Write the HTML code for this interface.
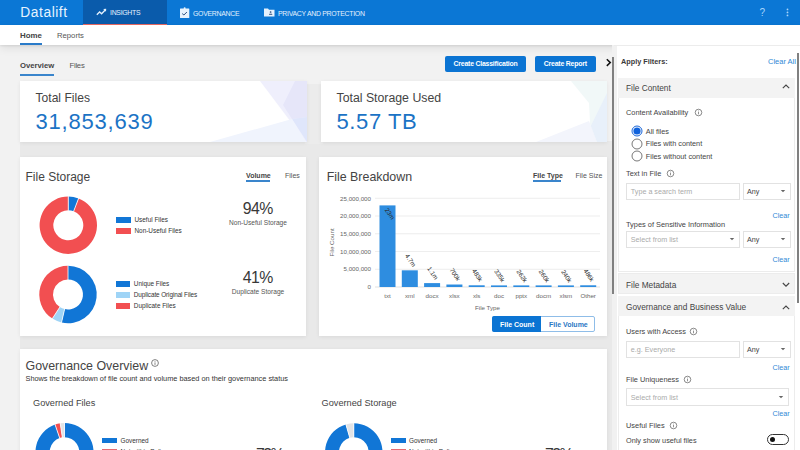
<!DOCTYPE html>
<html><head><meta charset="utf-8">
<style>
*{box-sizing:border-box;margin:0;padding:0}
html,body{width:800px;height:450px;overflow:hidden;background:#f2f2f2;font-family:"Liberation Sans",sans-serif;color:#333}
.a{position:absolute}
.t{position:absolute;white-space:nowrap;line-height:1}
#hdr{left:0;top:0;width:800px;height:24.5px;background:#0b77d5}
#act{left:83px;top:0;width:84px;height:24.5px;background:#0a5bab;border-bottom:1.5px solid #e86a64}
.ht{color:#e4f1fd;font-size:6.9px;letter-spacing:-0.28px}
#sub{left:0;top:24.5px;width:800px;height:20.5px;background:#fff;box-shadow:0 1px 2px rgba(0,0,0,.08),0 3px 10px rgba(0,0,0,.09)}
.card{position:absolute;background:#fff;box-shadow:0 1px 4px rgba(0,0,0,.07)}
.btn{position:absolute;background:#0b74d3;border-radius:2px;color:#fff;font-weight:bold;font-size:6.9px;letter-spacing:-0.2px;line-height:16px;text-align:center}
#panel{left:617px;top:45px;width:183px;height:405px;background:#fff}
.sh{position:absolute;left:618px;width:177px;height:20px;background:#f3f3f3}
.lbl{color:#444}
.lnk{color:#2f89d6}
.inp{position:absolute;border:1px solid #e2e2e2;background:#fff}
.ph{color:#aaa}
.lg{font-size:6.4px;color:#333}
.big{font-size:15.8px;color:#383838;letter-spacing:-0.5px}
.sm{font-size:6.6px;color:#555}
.pl{font-size:7.2px;color:#444}
.shd{font-size:8px;color:#444}
.info{position:absolute;width:7px;height:7px}
</style></head><body>
<!-- header -->
<div id="hdr" class="a"></div>
<div id="act" class="a"></div>
<div class="t" style="left:20.3px;top:6.3px;font-size:13.8px;color:#e6f3ff;letter-spacing:0.55px">Datalift</div>
<svg class="a" style="left:96px;top:8px" width="11" height="8" viewBox="0 0 11 8"><path d="M0.8 6.8 L3.6 4 L5.6 5.8 L9.2 2" stroke="#e4f1fd" stroke-width="1.3" fill="none"/><path d="M7.2 1 L10.2 0.8 L10 3.8 Z" fill="#e4f1fd"/></svg>
<div class="t ht" style="left:110px;top:10px">INSIGHTS</div>
<svg class="a" style="left:180px;top:6.5px" width="10" height="11" viewBox="0 0 10 11"><rect x="0" y="1.4" width="9.3" height="9.5" rx="0.5" fill="#e8f3fd"/><circle cx="4.65" cy="1.3" r="1" fill="#e8f3fd"/><path d="M2.2 6.6 L3.9 8 L6.9 5" stroke="#2c4f80" stroke-width="1" fill="none"/></svg>
<div class="t ht" style="left:193px;top:10.5px">GOVERNANCE</div>
<svg class="a" style="left:263.5px;top:8px" width="11" height="9" viewBox="0 0 11 9"><path d="M0 0.5 L4 0.5 L5 1.8 L10.5 1.8 L10.5 8.5 L0 8.5 Z" fill="#e4f1fd"/><circle cx="6.6" cy="4" r="0.85" fill="#2a4a78"/><rect x="5" y="5.7" width="3.3" height="1.1" rx="0.5" fill="#2a4a78"/></svg>
<div class="t ht" style="left:278px;top:10.5px">PRIVACY AND PROTECTION</div>
<div class="t" style="left:759.5px;top:8px;font-size:10px;color:#a9d5fb">?</div>
<svg class="a" style="left:786px;top:8px" width="3" height="9"><circle cx="1.5" cy="1.4" r="0.9" fill="#a9d5fb"/><circle cx="1.5" cy="4.4" r="0.9" fill="#a9d5fb"/><circle cx="1.5" cy="7.4" r="0.9" fill="#a9d5fb"/></svg>

<!-- subnav -->
<div id="sub" class="a"></div>
<div class="t" style="left:20px;top:31.6px;font-size:7.9px;font-weight:bold;color:#444">Home</div>
<div class="a" style="left:20px;top:43px;width:22px;height:1.8px;background:#2a7bc9"></div>
<div class="t" style="left:57px;top:31.6px;font-size:7.7px;color:#555">Reports</div>

<!-- overview tabs -->
<div class="t" style="left:20px;top:62px;font-size:7.7px;font-weight:bold;color:#444">Overview</div>
<div class="a" style="left:20px;top:74.3px;width:34px;height:1.8px;background:#3a85cc"></div>
<div class="t" style="left:69.5px;top:62px;font-size:7.7px;color:#555;letter-spacing:-0.25px">Files</div>
<div class="btn" style="left:445px;top:55.5px;width:81px;height:16px">Create Classification</div>
<div class="btn" style="left:535px;top:55.5px;width:60.5px;height:16px">Create Report</div>

<div class="a" style="left:20px;top:141px;width:592px;height:309px;background:#e9e9e9"></div>
<div class="a" style="left:305px;top:84px;width:18px;height:60px;background:#ececec"></div>
<!-- total cards -->
<div class="card" style="left:20px;top:81px;width:287px;height:61px"></div>
<div class="t" style="left:35.5px;top:92.2px;font-size:12.1px;color:#444">Total Files</div>
<div class="t" style="left:35.5px;top:110.6px;font-size:22px;color:#1b73c5;letter-spacing:0.8px">31,853,639</div>
<div class="card" style="left:321px;top:81px;width:286px;height:61px"></div>
<div class="t" style="left:336.5px;top:92.2px;font-size:12.3px;color:#444">Total Storage Used</div>
<div class="t" style="left:336.5px;top:110.6px;font-size:22px;color:#1b73c5;letter-spacing:0.6px">5.57 TB</div>

<svg class="a" style="left:20px;top:81px" width="287" height="61" viewBox="0 0 287 61">
<polygon points="240,0 287,0 287,61 286,61" fill="#efeffc"/>
<polygon points="275,0 287,0 287,36 272,38 263,24" fill="#e6e6f9"/>
<polygon points="272,38 287,36 287,61" fill="#dfe6fb"/>
<polygon points="190,61 272,38 286,61" fill="#f0f4fd"/>
</svg>
<svg class="a" style="left:321px;top:81px" width="286" height="61" viewBox="0 0 286 61">
<polygon points="250,0 286,0 286,61 270,61 268,22" fill="#f1f8f8"/>
<polygon points="286,12 286,61 262,61" fill="#e8f0fa"/>
<polygon points="215,61 268,40 276,61" fill="#f3f5fc"/>
</svg>
<!-- file storage card -->
<div class="card" style="left:20px;top:157px;width:286px;height:179px"></div>
<div class="t" style="left:25.5px;top:171px;font-size:12px;color:#444">File Storage</div>
<div class="t" style="left:246px;top:172px;font-size:7px;font-weight:bold;color:#444">Volume</div>
<div class="a" style="left:246px;top:180.3px;width:24px;height:1.5px;background:#3a85cc"></div>
<div class="t" style="left:285px;top:172px;font-size:7px;color:#555">Files</div>

<!-- file breakdown card -->
<div class="card" style="left:318.5px;top:157px;width:288.5px;height:179px"></div>
<div class="t" style="left:326.7px;top:170.6px;font-size:12.4px;color:#444">File Breakdown</div>
<div class="t" style="left:533px;top:172px;font-size:7px;font-weight:bold;color:#444">File Type</div>
<div class="a" style="left:533px;top:180.3px;width:27.5px;height:1.5px;background:#3a85cc"></div>
<div class="t" style="left:575.5px;top:172px;font-size:7px;color:#555">File Size</div>

<!-- governance card -->
<div class="card" style="left:20px;top:349px;width:587px;height:110px"></div>
<div class="t" style="left:25.5px;top:360px;font-size:12.4px;color:#444">Governance Overview</div>

<svg class="a" style="left:0;top:0" width="800" height="450" viewBox="0 0 800 450">
<!--d1-->
<path d="M68.30 196.50A28.7 28.7 0 0 1 78.59 198.41L73.68 211.20A15 15 0 0 0 68.30 210.20Z" fill="#1176d6"/>
<path d="M78.59 198.41A28.7 28.7 0 1 1 68.30 196.50L68.30 210.20A15 15 0 1 0 73.68 211.20Z" fill="#f24f51"/>
<line x1="68.30" y1="210.70" x2="68.30" y2="196.00" stroke="#fff" stroke-width="0.8"/>
<line x1="73.50" y1="211.66" x2="78.76" y2="197.94" stroke="#fff" stroke-width="0.8"/>
<!--d2-->
<path d="M68.00 265.80A28.7 28.7 0 1 1 61.54 322.46L64.63 309.12A15 15 0 1 0 68.00 279.50Z" fill="#1176d6"/>
<path d="M61.54 322.46A28.7 28.7 0 0 1 52.37 318.57L59.83 307.08A15 15 0 0 0 64.63 309.12Z" fill="#9fd4f6"/>
<path d="M52.37 318.57A28.7 28.7 0 0 1 68.00 265.80L68.00 279.50A15 15 0 0 0 59.83 307.08Z" fill="#f24f51"/>
<line x1="68.00" y1="280.00" x2="68.00" y2="265.30" stroke="#fff" stroke-width="0.8"/>
<line x1="64.74" y1="308.63" x2="61.43" y2="322.95" stroke="#fff" stroke-width="0.8"/>
<line x1="60.10" y1="306.66" x2="52.10" y2="318.99" stroke="#fff" stroke-width="0.8"/>
<!--d3-->
<path d="M64.50 423.00A29 29 0 1 1 55.06 424.58L59.68 438.01A14.8 14.8 0 1 0 64.50 437.20Z" fill="#1176d6"/>
<path d="M55.06 424.58A29 29 0 0 1 60.21 423.32L62.31 437.36A14.8 14.8 0 0 0 59.68 438.01Z" fill="#f24f51"/>
<path d="M60.21 423.32A29 29 0 0 1 64.50 423.00L64.50 437.20A14.8 14.8 0 0 0 62.31 437.36Z" fill="#e1e3e6"/>
<line x1="64.50" y1="437.70" x2="64.50" y2="422.50" stroke="#fff" stroke-width="0.8"/>
<line x1="59.84" y1="438.48" x2="54.90" y2="424.11" stroke="#fff" stroke-width="0.8"/>
<line x1="62.39" y1="437.86" x2="60.14" y2="422.82" stroke="#fff" stroke-width="0.8"/>
<!--d4-->
<path d="M353.80 423.30A28.7 28.7 0 1 1 345.89 424.41L349.72 437.77A14.8 14.8 0 1 0 353.80 437.20Z" fill="#1176d6"/>
<path d="M345.89 424.41A28.7 28.7 0 0 1 353.80 423.30L353.80 437.20A14.8 14.8 0 0 0 349.72 437.77Z" fill="#e1e3e6"/>
<line x1="353.80" y1="437.70" x2="353.80" y2="422.80" stroke="#fff" stroke-width="0.8"/>
<line x1="349.86" y1="438.25" x2="345.75" y2="423.93" stroke="#fff" stroke-width="0.8"/>

<line x1="375" y1="287.00" x2="600" y2="287.00" stroke="#d9d9d9" stroke-width="0.8"/>
<line x1="375" y1="269.26" x2="600" y2="269.26" stroke="#e8e8e8" stroke-width="0.8"/>
<line x1="375" y1="251.52" x2="600" y2="251.52" stroke="#e8e8e8" stroke-width="0.8"/>
<line x1="375" y1="233.78" x2="600" y2="233.78" stroke="#e8e8e8" stroke-width="0.8"/>
<line x1="375" y1="216.04" x2="600" y2="216.04" stroke="#e8e8e8" stroke-width="0.8"/>
<line x1="375" y1="198.30" x2="600" y2="198.30" stroke="#e8e8e8" stroke-width="0.8"/>
<rect x="379.50" y="205.40" width="16" height="81.60" fill="#2e8de0"/>
<rect x="401.80" y="270.32" width="16" height="16.68" fill="#2e8de0"/>
<rect x="424.10" y="283.10" width="16" height="3.90" fill="#2e8de0"/>
<rect x="446.40" y="284.52" width="16" height="2.48" fill="#2e8de0"/>
<rect x="468.70" y="285.29" width="16" height="1.71" fill="#2e8de0"/>
<rect x="491.00" y="285.40" width="16" height="1.60" fill="#2e8de0"/>
<rect x="513.30" y="285.40" width="16" height="1.60" fill="#2e8de0"/>
<rect x="535.60" y="285.40" width="16" height="1.60" fill="#2e8de0"/>
<rect x="557.90" y="285.40" width="16" height="1.60" fill="#2e8de0"/>
<rect x="580.20" y="285.28" width="16" height="1.72" fill="#2e8de0"/>

<g font-family="Liberation Sans" font-size="6.2" fill="#666">
<text x="371" y="289.20" text-anchor="end">0</text>
<text x="371" y="271.46" text-anchor="end">5,000,000</text>
<text x="371" y="253.72" text-anchor="end">10,000,000</text>
<text x="371" y="235.98" text-anchor="end">15,000,000</text>
<text x="371" y="218.24" text-anchor="end">20,000,000</text>
<text x="371" y="200.50" text-anchor="end">25,000,000</text>
<text x="387.50" y="298" text-anchor="middle">txt</text>
<text x="409.80" y="298" text-anchor="middle">xml</text>
<text x="432.10" y="298" text-anchor="middle">docx</text>
<text x="454.40" y="298" text-anchor="middle">xlsx</text>
<text x="476.70" y="298" text-anchor="middle">xls</text>
<text x="499.00" y="298" text-anchor="middle">doc</text>
<text x="521.30" y="298" text-anchor="middle">pptx</text>
<text x="543.60" y="298" text-anchor="middle">docm</text>
<text x="565.90" y="298" text-anchor="middle">xlsm</text>
<text x="588.20" y="298" text-anchor="middle">Other</text>
<text x="487.5" y="310" text-anchor="middle">File Type</text>
<text transform="translate(333.8,242.5) rotate(-90)" text-anchor="middle">File Count</text>
</g>
<g font-family="Liberation Sans" font-size="6.3">
<text transform="translate(384.50,209.90) rotate(56)" fill="#2a2a2a">23m</text>
<text transform="translate(404.80,255.80) rotate(56)" fill="#2a2a2a">4.7m</text>
<text transform="translate(427.10,268.60) rotate(56)" fill="#2a2a2a">1.1m</text>
<text transform="translate(449.40,270.00) rotate(56)" fill="#2a2a2a">700k</text>
<text transform="translate(471.70,270.80) rotate(56)" fill="#2a2a2a">483k</text>
<text transform="translate(494.00,271.30) rotate(56)" fill="#2a2a2a">335k</text>
<text transform="translate(516.30,271.60) rotate(56)" fill="#2a2a2a">262k</text>
<text transform="translate(538.60,271.60) rotate(56)" fill="#2a2a2a">260k</text>
<text transform="translate(560.90,271.70) rotate(56)" fill="#2a2a2a">240k</text>
<text transform="translate(583.20,270.80) rotate(56)" fill="#2a2a2a">486k</text>
</g>
</svg>
<!-- legends -->
<div class="a" style="left:116.3px;top:217px;width:15.2px;height:6px;background:#1176d6"></div>
<div class="a" style="left:116.3px;top:228px;width:15.2px;height:6px;background:#f24f51"></div>
<div class="t lg" style="left:134.5px;top:217.0px">Useful Files</div>
<div class="t lg" style="left:134.5px;top:228.0px">Non-Useful Files</div>
<div class="a" style="left:115.5px;top:281px;width:14.5px;height:5.5px;background:#1176d6"></div>
<div class="a" style="left:115.5px;top:292px;width:14.5px;height:5.5px;background:#9fd4f6"></div>
<div class="a" style="left:115.5px;top:303px;width:14.5px;height:5.5px;background:#f24f51"></div>
<div class="t lg" style="left:133.8px;top:281.0px">Unique Files</div>
<div class="t lg" style="left:133.8px;top:292.0px;letter-spacing:-0.1px">Duplicate Original Files</div>
<div class="t lg" style="left:133.8px;top:303.0px">Duplicate Files</div>
<div class="t big" style="left:242.8px;top:201.3px">94%</div>
<div class="t sm" style="left:229px;top:220px">Non-Useful Storage</div>
<div class="t big" style="left:242.8px;top:269.6px">41%</div>
<div class="t sm" style="left:231.8px;top:289px">Duplicate Storage</div>
<!-- toggle -->
<div class="a" style="left:492px;top:316px;width:103px;height:16px;border:1px solid #8fbde8;border-radius:2px;background:#fff"></div>
<div class="a" style="left:492px;top:316px;width:49px;height:16px;background:#0b74d3;border-radius:2px 0 0 2px"></div>
<div class="t" style="left:500px;top:320.5px;font-size:7px;font-weight:bold;color:#fff">File Count</div>
<div class="t" style="left:549px;top:320.5px;font-size:7px;font-weight:bold;color:#2a77c4">File Volume</div>
<!-- governance -->
<svg class="a" style="left:151.4px;top:359.2px" width="8" height="8" viewBox="0 0 8 8"><circle cx="4" cy="4" r="3.4" fill="none" stroke="#555" stroke-width="0.75"/><rect x="3.65" y="3.4" width="0.7" height="2.5" fill="#555"/><rect x="3.65" y="2.1" width="0.7" height="0.7" fill="#555"/></svg>
<div class="t" style="left:25.5px;top:374.5px;font-size:7.35px;color:#333">Shows the breakdown of file count and volume based on their governance status</div>
<div class="t" style="left:33px;top:399.3px;font-size:9.2px;color:#444">Governed Files</div>
<div class="t" style="left:321.6px;top:399.3px;font-size:9.2px;color:#444">Governed Storage</div>
<div class="a" style="left:102.2px;top:438.4px;width:14.5px;height:5px;background:#1176d6"></div>
<div class="a" style="left:102.2px;top:449px;width:14.5px;height:5px;background:#e86b70"></div>
<div class="t lg" style="left:120.5px;top:438.0px">Governed</div>
<div class="t lg" style="left:120.5px;top:449.0px">Not within Policy</div>
<div class="a" style="left:391px;top:438.4px;width:14.5px;height:5px;background:#1176d6"></div>
<div class="a" style="left:391px;top:449px;width:14.5px;height:5px;background:#e86b70"></div>
<div class="t lg" style="left:409px;top:438.0px">Governed</div>
<div class="t lg" style="left:409px;top:449.0px">Not within Policy</div>
<div class="t big" style="left:256px;top:447.2px;letter-spacing:-1.5px">73%</div>
<div class="t big" style="left:545px;top:447.2px;letter-spacing:-1.5px">73%</div>
<!-- scrollbar main -->
<div class="a" style="left:612px;top:45px;width:6px;height:405px;background:#f1f1f1"></div>
<div class="a" style="left:612px;top:57px;width:1.8px;height:237px;background:#808080"></div>

<!-- panel -->
<div id="panel" class="a"></div>
<div class="a" style="left:614px;top:44.5px;width:186px;height:1.5px;background:#ececec"></div>
<div class="t" style="left:621px;top:57.5px;font-size:7.3px;font-weight:bold;color:#3a3a3a">Apply Filters:</div>
<div class="t lnk" style="left:768px;top:57.5px;font-size:7.5px">Clear All</div>
<div class="a" style="left:618px;top:78px;width:177px;height:194px;border:1px solid #ececec;border-top:none;background:#fff"></div>
<div class="sh" style="top:78px;height:19.5px"></div>
<div class="t shd" style="left:626px;top:83.97px;font-size:8.3px;">File Content</div>
<svg class="a" style="left:781.7px;top:84.2px" width="8" height="5.2" viewBox="0 0 8 5.2"><path d="M0.8 4.2 L4 1 L7.2 4.2" fill="none" stroke="#444" stroke-width="1.1"/></svg>
<div class="t pl" style="left:626px;top:108.74px;font-size:7.4px;">Content Availability</div>
<svg class="a" style="left:694.2px;top:108.1px" width="9" height="9" viewBox="0 0 9 9"><circle cx="4.5" cy="4.5" r="3.3" fill="none" stroke="#666" stroke-width="0.75"/><rect x="4.15" y="3.9" width="0.7" height="2.4" fill="#666"/><rect x="4.15" y="2.6" width="0.7" height="0.7" fill="#666"/></svg>
<svg class="a" style="left:631.2px;top:125.19999999999999px" width="12" height="12" viewBox="0 0 12 12"><circle cx="6" cy="6" r="5" fill="#fff" stroke="#1a66d9" stroke-width="1"/><circle cx="6" cy="6" r="3.6" fill="#0f62dc"/></svg>
<div class="t pl" style="left:645.8px;top:127.82px;font-size:7.3px;">All files</div>
<svg class="a" style="left:631.2px;top:137.6px" width="12" height="12" viewBox="0 0 12 12"><circle cx="6" cy="6" r="5" fill="#fff" stroke="#555" stroke-width="0.8"/></svg>
<div class="t pl" style="left:645.8px;top:140.22px;font-size:7.3px;">Files with content</div>
<svg class="a" style="left:631.2px;top:150.2px" width="12" height="12" viewBox="0 0 12 12"><circle cx="6" cy="6" r="5" fill="#fff" stroke="#555" stroke-width="0.8"/></svg>
<div class="t pl" style="left:645.8px;top:152.82px;font-size:7.3px;">Files without content</div>
<div class="t pl" style="left:626px;top:169.54px;font-size:7.4px;">Text in File</div>
<svg class="a" style="left:666.3px;top:169.1px" width="9" height="9" viewBox="0 0 9 9"><circle cx="4.5" cy="4.5" r="3.3" fill="none" stroke="#666" stroke-width="0.75"/><rect x="4.15" y="3.9" width="0.7" height="2.4" fill="#666"/><rect x="4.15" y="2.6" width="0.7" height="0.7" fill="#666"/></svg>
<div class="inp" style="left:625.5px;top:182.5px;width:114.5px;height:17px"></div>
<div class="t ph" style="left:630.8px;top:187.91px;font-size:7.2px;">Type a search term</div>
<div class="inp" style="left:742.5px;top:182.5px;width:48.8px;height:17px"></div>
<div class="t pl" style="left:747px;top:187.91px;font-size:7.2px;">Any</div>
<svg class="a" style="left:780.3px;top:189px" width="6" height="4" viewBox="0 0 6 4"><path d="M0.8 1 L5.2 1 L3 3.2Z" fill="#666"/></svg>
<div class="t lnk" style="left:772.5px;top:211.51px;font-size:7.2px;">Clear</div>
<div class="t pl" style="left:626px;top:221.34px;font-size:7.4px;">Types of Sensitive Information</div>
<div class="inp" style="left:625.5px;top:230.5px;width:114.5px;height:17px"></div>
<div class="t ph" style="left:630.8px;top:235.91px;font-size:7.2px;">Select from list</div>
<svg class="a" style="left:729px;top:237px" width="6" height="4" viewBox="0 0 6 4"><path d="M0.8 1 L5.2 1 L3 3.2Z" fill="#666"/></svg>
<div class="inp" style="left:742.5px;top:230.5px;width:48.8px;height:17px"></div>
<div class="t pl" style="left:747px;top:235.91px;font-size:7.2px;">Any</div>
<svg class="a" style="left:780.3px;top:237px" width="6" height="4" viewBox="0 0 6 4"><path d="M0.8 1 L5.2 1 L3 3.2Z" fill="#666"/></svg>
<div class="t lnk" style="left:772.5px;top:255.91px;font-size:7.2px;">Clear</div>
<div class="sh" style="top:273px;height:20.5px;border:1px solid #ececec"></div>
<div class="t shd" style="left:626px;top:280.57px;font-size:8.3px;">File Metadata</div>
<svg class="a" style="left:781.7px;top:282.4px" width="8" height="5.2" viewBox="0 0 8 5.2"><path d="M0.8 1 L4 4.2 L7.2 1" fill="none" stroke="#444" stroke-width="1.1"/></svg>
<div class="a" style="left:618px;top:295.5px;width:177px;height:160px;border:1px solid #ececec;background:#fff"></div>
<div class="sh" style="top:295.5px;height:20.5px"></div>
<div class="t shd" style="left:626px;top:302.97px;font-size:8.3px;">Governance and Business Value</div>
<svg class="a" style="left:781.7px;top:304.9px" width="8" height="5.2" viewBox="0 0 8 5.2"><path d="M0.8 4.2 L4 1 L7.2 4.2" fill="none" stroke="#444" stroke-width="1.1"/></svg>
<div class="t pl" style="left:626px;top:327.54px;font-size:7.4px;">Users with Access</div>
<svg class="a" style="left:689.3px;top:326.8px" width="9" height="9" viewBox="0 0 9 9"><circle cx="4.5" cy="4.5" r="3.3" fill="none" stroke="#666" stroke-width="0.75"/><rect x="4.15" y="3.9" width="0.7" height="2.4" fill="#666"/><rect x="4.15" y="2.6" width="0.7" height="0.7" fill="#666"/></svg>
<div class="inp" style="left:625.5px;top:340.5px;width:114.5px;height:17px"></div>
<div class="t ph" style="left:630.8px;top:345.91px;font-size:7.2px;">e.g. Everyone</div>
<div class="inp" style="left:742.5px;top:340.5px;width:48.8px;height:17px"></div>
<div class="t pl" style="left:747px;top:345.91px;font-size:7.2px;">Any</div>
<svg class="a" style="left:780.3px;top:347px" width="6" height="4" viewBox="0 0 6 4"><path d="M0.8 1 L5.2 1 L3 3.2Z" fill="#666"/></svg>
<div class="t lnk" style="left:772.5px;top:363.91px;font-size:7.2px;">Clear</div>
<div class="t pl" style="left:626px;top:375.54px;font-size:7.4px;">File Uniqueness</div>
<svg class="a" style="left:683.0px;top:374.8px" width="9" height="9" viewBox="0 0 9 9"><circle cx="4.5" cy="4.5" r="3.3" fill="none" stroke="#666" stroke-width="0.75"/><rect x="4.15" y="3.9" width="0.7" height="2.4" fill="#666"/><rect x="4.15" y="2.6" width="0.7" height="0.7" fill="#666"/></svg>
<div class="inp" style="left:625.5px;top:388px;width:163.8px;height:17.5px"></div>
<div class="t ph" style="left:630.8px;top:393.91px;font-size:7.2px;">Select from list</div>
<svg class="a" style="left:778.3px;top:395px" width="6" height="4" viewBox="0 0 6 4"><path d="M0.8 1 L5.2 1 L3 3.2Z" fill="#666"/></svg>
<div class="t lnk" style="left:772.5px;top:409.91px;font-size:7.2px;">Clear</div>
<div class="t pl" style="left:626px;top:421.74px;font-size:7.4px;">Useful Files</div>
<svg class="a" style="left:668.5px;top:421.0px" width="9" height="9" viewBox="0 0 9 9"><circle cx="4.5" cy="4.5" r="3.3" fill="none" stroke="#666" stroke-width="0.75"/><rect x="4.15" y="3.9" width="0.7" height="2.4" fill="#666"/><rect x="4.15" y="2.6" width="0.7" height="0.7" fill="#666"/></svg>
<div class="t pl" style="left:626px;top:436.82px;font-size:7.3px;">Only show useful files</div>
<div class="a" style="left:767px;top:434.3px;width:22.3px;height:10.7px;border:1px solid #333;border-radius:6px;background:#fff"></div>
<div class="a" style="left:770px;top:437.2px;width:5px;height:5px;border-radius:50%;background:#111"></div>
<svg class="a" style="left:605px;top:57.5px" width="8" height="9" viewBox="0 0 8 9"><path d="M1.8 1.3 L5.3 4.6 L1.8 7.9" fill="none" stroke="#111" stroke-width="1.5"/></svg>
<div class="a" style="left:797.2px;top:53px;width:1.8px;height:250px;background:#808080"></div>
</body></html>
